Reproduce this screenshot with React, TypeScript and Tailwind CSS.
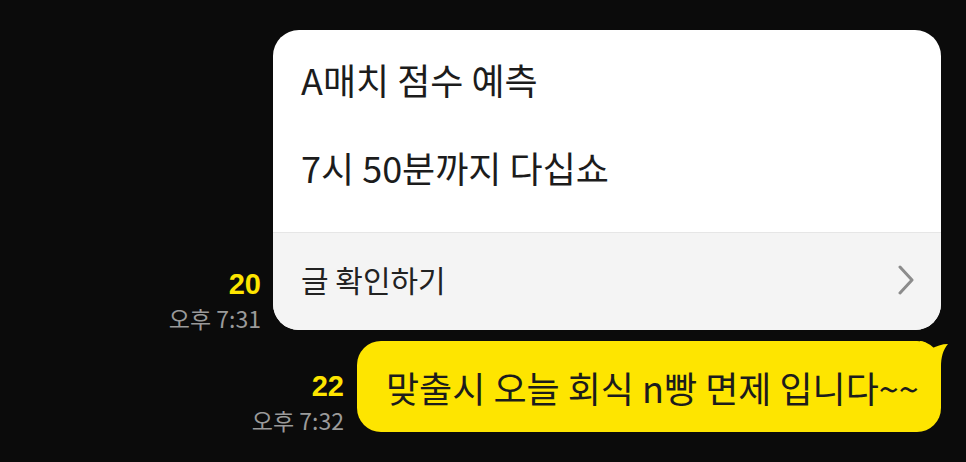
const font = { fontFamily: '"Noto Sans CJK KR", "Noto Sans", sans-serif' };
const digits = { fontFamily: '"Liberation Sans", Arial, sans-serif' };

const Stamp = ({ count, time }: { count: string; time: string }) => (
  <div className="flex flex-col items-end -mb-[2px]">
    <span className="text-[29px] leading-[32px] font-bold text-[#fee500] mb-[4px]" style={digits}>{count}</span>
    <span className="text-[23px] leading-[28px] text-[#9a9a9a]">{time}</span>
  </div>
);

export default function App() {
  return (
    <div className="w-[966px] h-[462px] bg-[#0b0b0b] overflow-hidden" style={font}>
      <div className="flex flex-col items-end pt-[30px] pr-[25px]">
        <div className="flex items-end gap-[12px]">
          <Stamp count="20" time="오후 7:31" />
          <div className="w-[668px] h-[300px] rounded-[26px] bg-white overflow-hidden flex flex-col">
            <div className="flex flex-col gap-[44px] pt-[27px] pl-[28px] pb-[43px] text-[#1c1c1c] text-[36px] leading-[44px]">
              <span>A매치 점수 예측</span>
              <span>7시 50분까지 다십쇼</span>
            </div>
            <div className="flex-1 border-t border-[#e6e6e6] bg-[#f4f4f4] flex items-center justify-between pl-[28px] pr-[26px] pb-[4px]">
              <span className="text-[30px] text-[#222]">글 확인하기</span>
              <svg width="18" height="30" viewBox="0 0 18 30" fill="none">
                <path d="M3,2 L15,15 L3,28" stroke="#8c8c8c" strokeWidth="3" strokeLinecap="round" strokeLinejoin="round" />
              </svg>
            </div>
          </div>
        </div>

        <div className="flex items-end gap-[13px] mt-[11px]">
          <Stamp count="22" time="오후 7:32" />
          <div className="relative w-[584px] h-[91px] rounded-[24px] bg-[#fee500] flex items-center pl-[29px]">
            <span className="text-[36px] text-[#1c1c1c]">맞출시 오늘 회식 n빵 면제 입니다~~</span>
            <svg className="absolute left-[563px] top-0" width="30" height="32" viewBox="0 0 30 32">
              <path d="M0,0 C6,0 9,4 11,8 C16,5 22,3 28,3 C23,9 21,16 21,26 L21,32 L0,32 Z" fill="#fee500" />
            </svg>
          </div>
        </div>
      </div>
    </div>
  );
}
